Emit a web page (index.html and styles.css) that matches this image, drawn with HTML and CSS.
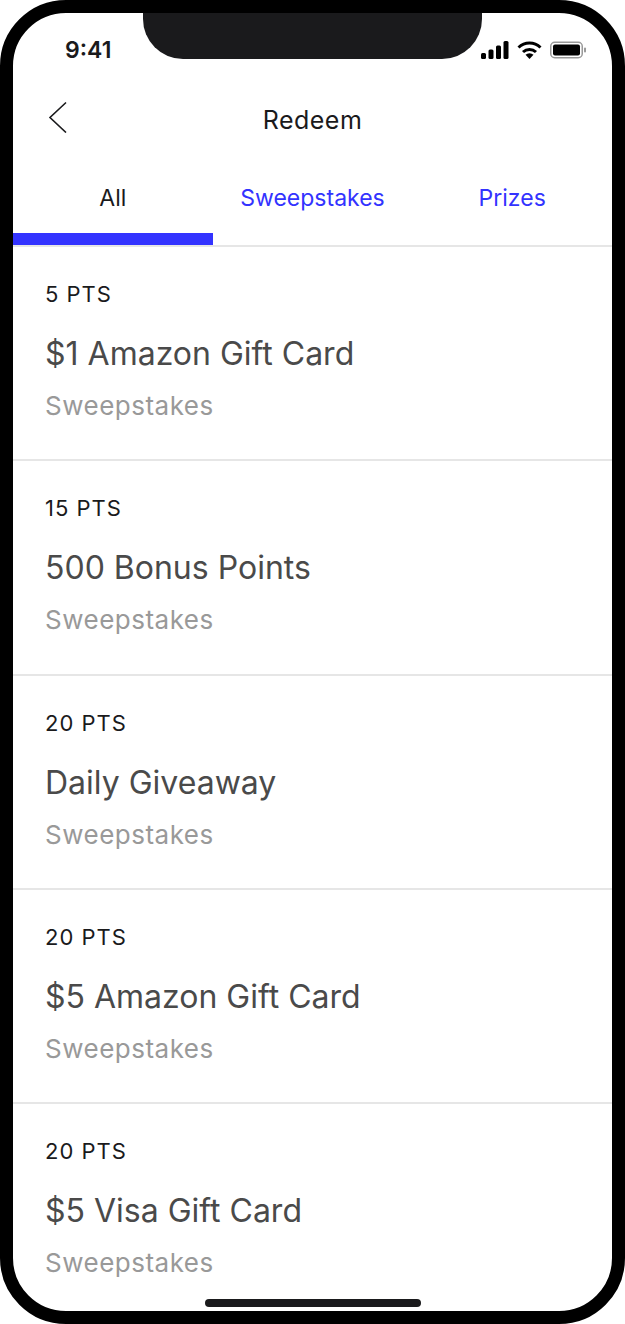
FILE: index.html
```html
<!DOCTYPE html>
<html>
  <head>
    <title>Redeem</title>
    <link rel="stylesheet" href="styles.css">
  </head>
  <body>
    <div class="phone">
      <div class="notch"></div>
      <div class="status-bar">
        <span class="time">9:41</span>
        <div class="status-icons">
          <svg width="28" height="18" viewBox="0 0 28 18"><rect x="0" y="12" width="5" height="6" rx="1.5"/><rect x="7.5" y="8.5" width="5" height="9.5" rx="1.5"/><rect x="15" y="4.5" width="5" height="13.5" rx="1.5"/><rect x="22.5" y="0" width="5" height="18" rx="1.5"/></svg>
          <svg width="25" height="18" viewBox="0 0 25 18"><path d="M1.5 6.5a16 16 0 0 1 22 0" fill="none" stroke="#000" stroke-width="3"/><path d="M6 11a9.5 9.5 0 0 1 13 0" fill="none" stroke="#000" stroke-width="3"/><path d="M12.5 18l-4-4.2a5.8 5.8 0 0 1 8 0z"/></svg>
          <svg width="37" height="18" viewBox="0 0 37 18"><rect x="0.75" y="1.25" width="31.5" height="15.5" rx="4" fill="none" stroke="#999" stroke-width="1.5"/><rect x="3" y="3.5" width="27" height="11" rx="2"/><rect x="34" y="6.5" width="2" height="5" rx="1" fill="#999"/></svg>
        </div>
      </div>
      <div class="nav-bar">
        <svg class="back" width="20" height="32" viewBox="0 0 20 32"><path d="M18 1.500L2 16.500l16 15" fill="none" stroke="#1a1a1c" stroke-width="1.600"/></svg>
        <h1>Redeem</h1>
      </div>
      <div class="tabs">
        <div class="tab active">All</div>
        <div class="tab">Sweepstakes</div>
        <div class="tab">Prizes</div>
      </div>
      <div class="list">
        <div class="item">
          <div class="pts">5 PTS</div>
          <div class="name">$1 Amazon Gift Card</div>
          <div class="kind">Sweepstakes</div>
        </div>
        <div class="item">
          <div class="pts">15 PTS</div>
          <div class="name">500 Bonus Points</div>
          <div class="kind">Sweepstakes</div>
        </div>
        <div class="item">
          <div class="pts">20 PTS</div>
          <div class="name">Daily Giveaway</div>
          <div class="kind">Sweepstakes</div>
        </div>
        <div class="item">
          <div class="pts">20 PTS</div>
          <div class="name">$5 Amazon Gift Card</div>
          <div class="kind">Sweepstakes</div>
        </div>
        <div class="item">
          <div class="pts">20 PTS</div>
          <div class="name">$5 Visa Gift Card</div>
          <div class="kind">Sweepstakes</div>
        </div>
      </div>
      <div class="home-bar"></div>
    </div>
  </body>
</html>
```

FILE: styles.css
```css
html, body {
  margin: 0;
  padding: 0;
  background: #fff;
}

body {
  height: 1324px;
  overflow: hidden;
  font-family: "Inter", "Liberation Sans", sans-serif;
}

/* Device frame */
.phone {
  position: relative;
  box-sizing: border-box;
  width: 625px;
  height: 1324px;
  padding-top: 0;
  border: 13px solid #000;
  border-radius: 66px;
  background: #fff;
  overflow: hidden;
}

.notch {
  position: absolute;
  top: 0;
  left: 130px;
  width: 339px;
  height: 46px;
  background: #1a1a1c;
  border-radius: 0 0 40px 40px;
}

.status-bar {
  display: flex;
  justify-content: space-between;
  align-items: center;
  height: 74px;
  padding: 0 25px 0 52px;
}

.time {
  font-size: 23px;
  font-weight: 600;
  color: #1a1a1c;
}

.status-icons {
  display: flex;
  align-items: center;
  gap: 8px;
}

.nav-bar {
  position: relative;
  display: flex;
  justify-content: center;
  align-items: center;
  height: 66px;
}

.nav-bar h1 {
  margin: 0;
  font-size: 25px;
  font-weight: 400;
  letter-spacing: 0.5px;
  color: #1a1a1c;
}

.back {
  position: absolute;
  left: 35px;
  top: 14px;
}

.tabs {
  display: flex;
  height: 92px;
  border-bottom: 2px solid #e6e6e6;
}

.tab {
  flex: 1;
  box-sizing: border-box;
  height: 92px;
  padding-top: 31px;
  text-align: center;
  font-size: 23px;
  color: #3333ff;
}

.tab.active {
  color: #1a1a1c;
  border-bottom: 12px solid #3333ff;
}

.item {
  box-sizing: border-box;
  height: 214.33px;
  padding: 33px 32px 0;
  border-bottom: 2px solid #e6e6e6;
}

.pts {
  font-size: 22px;
  line-height: 28px;
  letter-spacing: 1px;
  color: #1a1a1c;
}

.name {
  margin-top: 26px;
  font-size: 32px;
  line-height: 40px;
  color: #4a4a4a;
}

.kind {
  margin-top: 16px;
  font-size: 26px;
  line-height: 32px;
  letter-spacing: 0.5px;
  color: #999;
}

.home-bar {
  position: absolute;
  left: 192px;
  bottom: 4px;
  width: 216px;
  height: 8px;
  border-radius: 4px;
  background: #1a1a1c;
}
```
